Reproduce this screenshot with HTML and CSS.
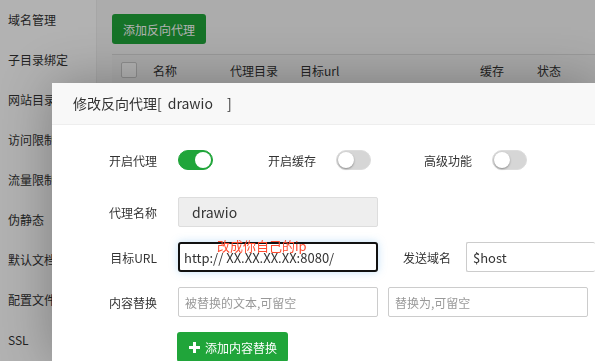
FILE: index.html
```html
<!DOCTYPE html>
<html lang="zh-CN">
<head>
  <meta charset="UTF-8" />
  <title>修改反向代理</title>
  <link rel="stylesheet" href="styles.css">
</head>
<body>
  <div class="page">
    <aside class="side">
      <div class="side-item">域名管理</div>
      <div class="side-item">子目录绑定</div>
      <div class="side-item">网站目录</div>
      <div class="side-item">访问限制</div>
      <div class="side-item">流量限制</div>
      <div class="side-item">伪静态</div>
      <div class="side-item">默认文档</div>
      <div class="side-item">配置文件</div>
      <div class="side-item">SSL</div>
    </aside>
    <main class="main">
      <button class="btn btn-add">添加反向代理</button>
      <div class="table-head">
        <span class="cell cell-check"><i class="checkbox"></i></span>
        <span class="cell cell-name">名称</span>
        <span class="cell cell-dir">代理目录</span>
        <span class="cell cell-url">目标url</span>
        <span class="cell cell-cache">缓存</span>
        <span class="cell">状态</span>
      </div>
    </main>
  </div>

  <div class="shade"></div>

  <div class="layer">
    <div class="layer-title">修改反向代理[<span class="site">drawio</span>]</div>
    <div class="layer-body">
      <div class="line line-switch">
        <span class="label">开启代理</span>
        <span class="switch on"></span>
        <span class="opt-label">开启缓存</span>
        <span class="switch"></span>
        <span class="opt-label opt-last">高级功能</span>
        <span class="switch"></span>
      </div>
      <div class="line">
        <span class="label">代理名称</span>
        <input class="input input-off" value="drawio" disabled>
      </div>
      <div class="line">
        <span class="label">目标URL</span>
        <div class="url-box">
          <input class="input input-focus" value="http:// XX.XX.XX.XX:8080/">
          <span class="note">改成你自己的ip</span>
        </div>
        <span class="opt-label opt-host">发送域名</span>
        <input class="input input-host" value="$host">
      </div>
      <div class="line">
        <span class="label">内容替换</span>
        <input class="input" placeholder="被替换的文本,可留空">
        <input class="input input-gap" placeholder="替换为,可留空">
      </div>
      <div class="line">
        <span class="label"></span>
        <button class="btn btn-plus">
          <svg width="11" height="11" viewBox="0 0 11 11"><path d="M4 0h3v4h4v3H7v4H4V7H0V4h4z" fill="#fff"/></svg>
          添加内容替换
        </button>
      </div>
    </div>
  </div>
</body>
</html>
```

FILE: styles.css
```css
:root {
  --green: #20a53a;
  --text: #333;
  --font: "Noto Sans CJK SC", "Liberation Sans", sans-serif;
}

* {
  box-sizing: border-box;
}

body {
  margin: 0;
  font-family: var(--font);
  font-size: 12px;
  color: var(--text);
  overflow: hidden;
}

.page {
  display: flex;
  height: 361px;
  overflow: hidden;
}

.side {
  width: 97px;
  flex-shrink: 0;
  background: #fff;
  border-right: 1px solid #eee;
}

.side-item {
  height: 40px;
  line-height: 40px;
  padding-left: 8px;
  white-space: nowrap;
  overflow: hidden;
}

.main {
  flex: 1;
  min-width: 0;
  background: #f7f7f7;
  padding: 14px 0 0 15px;
}

.btn {
  border: none;
  border-radius: 3px;
  background: var(--green);
  color: #fff;
  font-family: var(--font);
  font-size: 12px;
  height: 30px;
  cursor: pointer;
}

.btn-add {
  padding: 0 11px;
}

.table-head {
  display: flex;
  align-items: center;
  margin-top: 10px;
  height: 31px;
  border-top: 1px solid #ddd;
  background: #f2f2f2;
}

.cell {
  flex-shrink: 0;
}

.cell-check {
  width: 41px;
  padding-left: 9px;
  display: flex;
}

.checkbox {
  width: 16px;
  height: 16px;
  border: 1px solid #ccc;
  border-radius: 2px;
  background: #fff;
}

.cell-name { width: 77px; }
.cell-dir { width: 70px; }
.cell-url { width: 180px; }
.cell-cache { width: 57px; }

.shade {
  position: fixed;
  inset: 0;
  background: rgba(0, 0, 0, 0.3);
}

/* dialog runs off the right and bottom of the window, so clip it there */
.layer {
  position: absolute;
  left: 52px;
  top: 83px;
  right: 0;
  bottom: 0;
  overflow: hidden;
  background: #fff;
  box-shadow: 1px 1px 50px rgba(0, 0, 0, 0.3);
}

.layer-title {
  height: 42px;
  line-height: 41px;
  padding-left: 21px;
  font-size: 14px;
  background: #f8f8f8;
  border-bottom: 1px solid #eee;
}

.site {
  margin: 0 14px 0 6px;
}

.layer-body {
  padding: 20px 0 0 25px;
}

.line {
  display: flex;
  align-items: center;
  height: 30px;
  margin-bottom: 15px;
}

.line-switch {
  margin-bottom: 22px;
}

.label {
  width: 80px;
  text-align: right;
  margin-right: 21px;
  flex-shrink: 0;
}

.opt-label {
  margin: 0 20px 0 55px;
  flex-shrink: 0;
}

.opt-last {
  margin-left: 53px;
}

.opt-host {
  margin: 0 15px 0 25px;
}

.switch {
  position: relative;
  width: 35px;
  height: 20px;
  border-radius: 10px;
  background: #d6d6d6;
  border: 1px solid #dcdcdc;
  flex-shrink: 0;
}

.switch::after {
  content: "";
  position: absolute;
  top: 1px;
  left: 1px;
  width: 16px;
  height: 16px;
  border-radius: 50%;
  background: #fff;
  box-shadow: 0 1px 2px rgba(0, 0, 0, 0.35);
}

.switch.on {
  background: var(--green);
  border-color: var(--green);
}

.switch.on::after {
  left: 16px;
  box-shadow: none;
}

.input {
  width: 200px;
  height: 30px;
  border: 1px solid #ccc;
  border-radius: 2px;
  padding: 0 6px;
  font-family: var(--font);
  font-size: 13px;
  color: var(--text);
  background: #fff;
  outline: none;
  flex-shrink: 0;
}

.input::placeholder {
  color: #999;
  font-size: 12px;
}

.input-off {
  background: #eee;
  border-color: #ddd;
  padding-left: 13px;
  font-size: 14px;
}

.input-host {
  flex-shrink: 1;
  min-width: 0;
  border-right: none;
}

.url-box {
  position: relative;
  flex-shrink: 0;
}

.input-focus {
  display: block;
  border: 2px solid #111;
  border-radius: 3px;
  padding-left: 4px;
  box-shadow: 0 0 8px rgba(82, 168, 236, 0.35);
}

.note {
  position: absolute;
  left: 39px;
  top: -4px;
  font-size: 13px;
  line-height: 15px;
  color: #ff4a2e;
  white-space: nowrap;
}

.input-gap {
  margin-left: 10px;
}

.btn-plus {
  display: flex;
  align-items: center;
  gap: 5px;
  padding: 0 11px 0 12px;
  margin-left: -1px;
}
```
